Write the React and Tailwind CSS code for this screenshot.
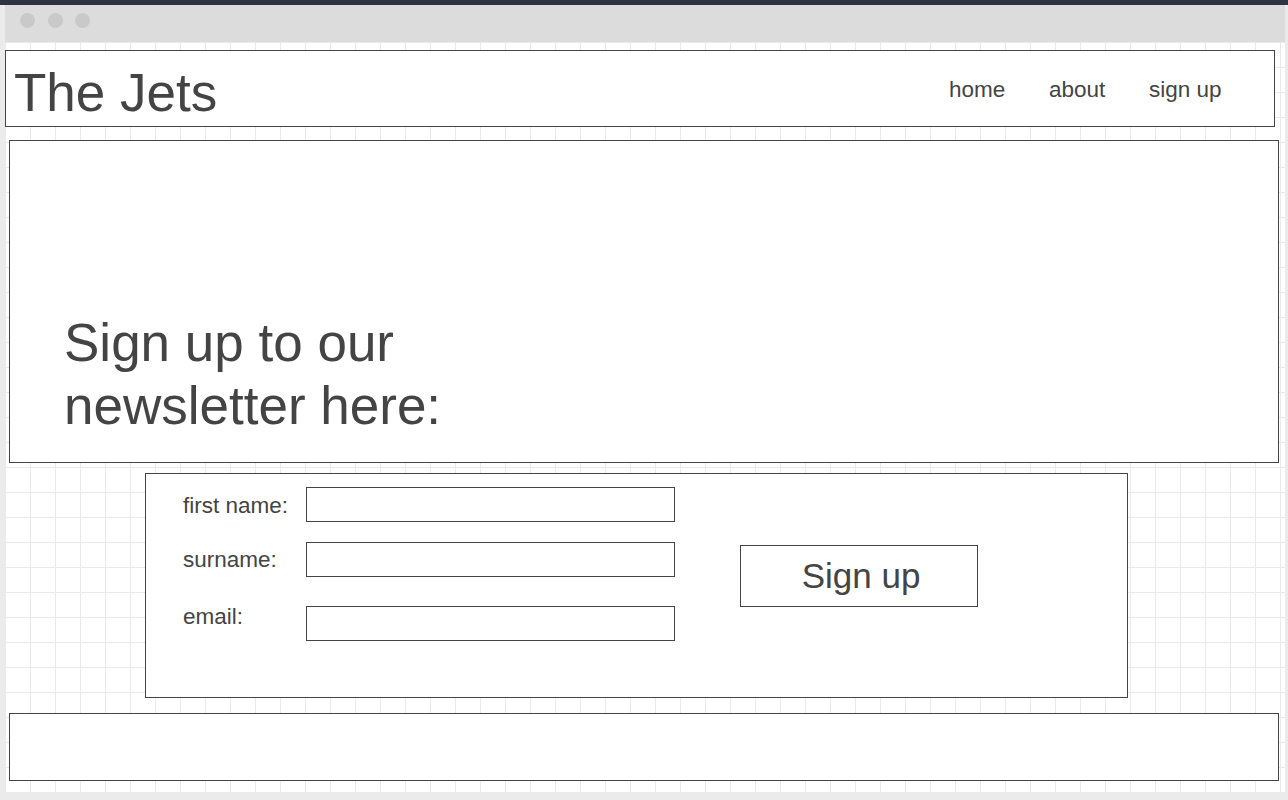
import React from "react";

const font = { fontFamily: '"Liberation Sans", Arial, sans-serif' };

function Label({ children, className }) {
  return (
    <div className={"w-[123px] shrink-0 text-[22.5px] leading-none text-[#444] " + className}>
      {children}
    </div>
  );
}

function Field() {
  return (
    <input
      type="text"
      aria-label="field"
      className="block w-[369px] h-[35px] border border-[#444] bg-white outline-none"
    />
  );
}

export default function App() {
  return (
    <div className="w-[1288px] h-[800px] bg-[#ebebeb] overflow-hidden" style={font}>
      <div className="h-[5px] bg-[#2e3241]" />
      <div className="ml-[5px] w-[1280px]">
        {/* title bar */}
        <div className="h-[37px] bg-[#dcdcdc] flex items-start pt-[7.5px] pl-[15px] gap-[12.5px]">
          <span className="block w-[15px] h-[15px] rounded-full bg-[#c9c9c9]" />
          <span className="block w-[15px] h-[15px] rounded-full bg-[#c9c9c9]" />
          <span className="block w-[15px] h-[15px] rounded-full bg-[#c9c9c9]" />
        </div>

        {/* canvas */}
        <div className="h-[750px] bg-white bg-[linear-gradient(to_right,#eaeaea_1px,transparent_1px),linear-gradient(to_bottom,#eaeaea_1px,transparent_1px)] bg-[size:25px_25px] pt-[8px]">
          {/* header */}
          <header className="w-[1270px] h-[77px] border border-[#444] bg-white flex items-start">
            <div className="ml-[8px] mt-[15px] text-[53px] leading-none text-[#444]">The Jets</div>
            <nav className="ml-auto mr-[25px] mt-[28px] flex text-[22.5px] leading-none text-[#444]">
              <span className="w-[100px]">home</span>
              <span className="w-[100px]">about</span>
              <span className="w-[100px]">sign up</span>
            </nav>
          </header>

          {/* hero */}
          <section className="ml-[4px] mt-[13px] w-[1270px] h-[323px] border border-[#444] bg-white flex flex-col justify-end pl-[54px] pb-[25px]">
            <h1 className="text-[53px] leading-[63px] text-[#444] font-normal">
              Sign up to our
              <br />
              newsletter here:
            </h1>
          </section>

          {/* form */}
          <section className="ml-[140px] mt-[10px] w-[983px] h-[225px] border border-[#444] bg-white pl-[37px] pt-[13px] flex items-start">
            <div className="flex flex-col">
              <div className="flex items-start">
                <Label className="mt-[7.5px]">first name:</Label>
                <Field />
              </div>
              <div className="flex items-start mt-[20px]">
                <Label className="mt-[7px]">surname:</Label>
                <Field />
              </div>
              <div className="flex items-start mt-[29px]">
                <Label className="mt-[0px]">email:</Label>
                <Field />
              </div>
            </div>
            <button
              type="button"
              className="ml-[65px] mt-[58px] w-[238px] h-[62px] border border-[#444] bg-white flex items-center justify-center pl-[4px] pb-[1px] text-[35px] leading-none text-[#444]"
              style={font}
            >
              Sign up
            </button>
          </section>

          {/* footer */}
          <footer className="ml-[4px] mt-[15px] w-[1270px] h-[68px] border border-[#444] bg-white" />
        </div>
      </div>
    </div>
  );
}
